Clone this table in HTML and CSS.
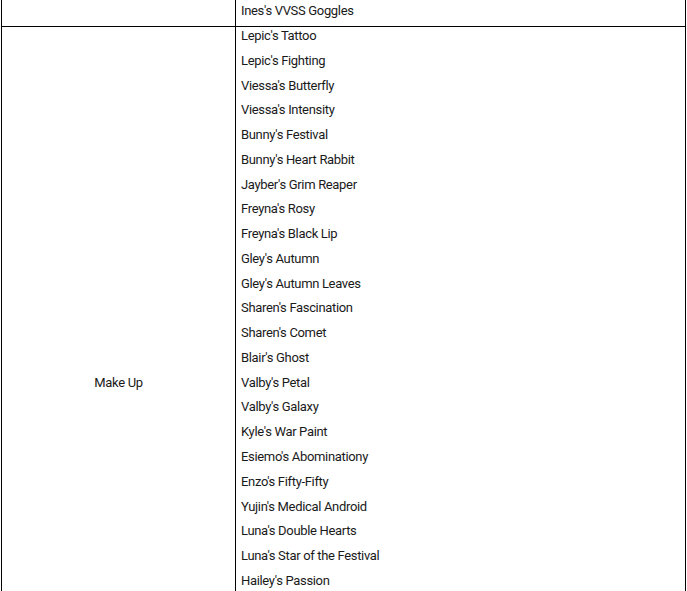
FILE: index.html
```html
<!DOCTYPE html>
<html lang="ko">
<head>
<meta charset="utf-8">
<title>Make Up</title>
<link rel="stylesheet" href="styles.css">
</head>
<body>
<table class="items">
  <tr class="first">
    <td class="cat"></td>
    <td class="list"><p>Ines's VVSS Goggles</p></td>
  </tr>
  <tr>
    <td class="cat">Make Up</td>
    <td class="list">
      <p>Lepic's Tattoo</p>
      <p>Lepic's Fighting</p>
      <p>Viessa's Butterfly</p>
      <p>Viessa's Intensity</p>
      <p>Bunny's Festival</p>
      <p>Bunny's Heart Rabbit</p>
      <p>Jayber's Grim Reaper</p>
      <p>Freyna's Rosy</p>
      <p>Freyna's Black Lip</p>
      <p>Gley's Autumn</p>
      <p>Gley's Autumn Leaves</p>
      <p>Sharen's Fascination</p>
      <p>Sharen's Comet</p>
      <p>Blair's Ghost</p>
      <p>Valby's Petal</p>
      <p>Valby's Galaxy</p>
      <p>Kyle's War Paint</p>
      <p>Esiemo's Abominationy</p>
      <p>Enzo's Fifty-Fifty</p>
      <p>Yujin's Medical Android</p>
      <p>Luna's Double Hearts</p>
      <p>Luna's Star of the Festival</p>
      <p>Hailey's Passion</p>
      <p>Hailey's Crimson</p>
      <p>Ajax's Guardian</p>
      <p>Ultimate Bunny's Neon</p>
      <p>Ultimate Viessa's Frost</p>
      <p>Ultimate Gley's Shadow</p>
      <p>Ultimate Lepic's Flame</p>
    </td>
  </tr>
</table>
</body>
</html>
```

FILE: styles.css
```css
html, body {
  margin: 0;
  padding: 0;
  background: #ffffff;
}
body {
  font-family: Roboto, "Noto Sans CJK KR", sans-serif;
  font-size: 13px;
  letter-spacing: -0.33px;
  color: #1a1a1a;
}
.items {
  border-collapse: collapse;
  width: 685px;
  margin-left: 1px;
}
.items td {
  border: 1px solid #000000;
  padding: 0 5px;
  vertical-align: middle;
}
.items .first td {
  border-top: 0;
}
.items .first .list {
  padding-top: 2px;
  padding-bottom: 6px;
}
.items .cat {
  width: 223px;
  text-align: center;
}
.items p {
  margin: 0 0 6.77px;
  line-height: 18px;
}
.items .list p:last-child {
  margin-bottom: 0;
}
```
